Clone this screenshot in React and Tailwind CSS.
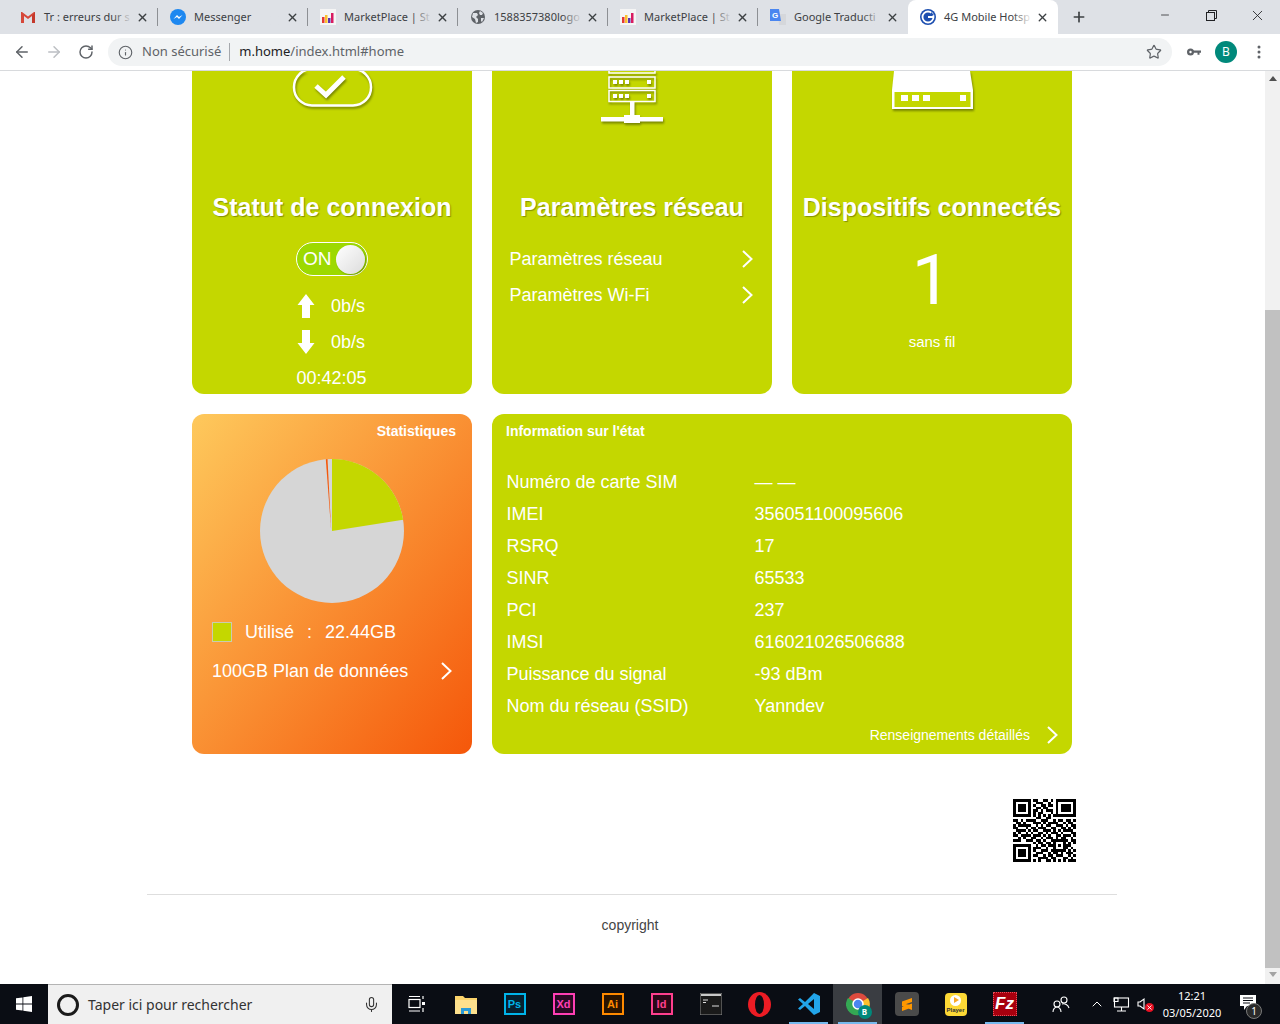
import { X, Plus, ArrowLeft, ArrowRight, RotateCw, Info, Star, Minus, ChevronUp, Mic } from 'lucide-react';

const sans = 'font-["Liberation_Sans",Arial,sans-serif]';
const ui = 'font-["Noto_Sans","Open_Sans",sans-serif]';

const Gmail = () => (
  <svg width="16" height="16" viewBox="0 0 16 16">
    <path d="M1 3v11h3V7l4 3 4-3v7h3V3h-1L8 7.5 2 3z" fill="#d6483a" />
    <path d="M12 7v7h3V3z" fill="#c4392c" />
  </svg>
);
const Messenger = () => (
  <svg width="16" height="16" viewBox="0 0 16 16">
    <circle cx="8" cy="8" r="8" fill="#1e88f0" />
    <path d="M3.5 10 7 6l2 2 3.5-2-3.500 4-2-2z" fill="#fff" />
  </svg>
);
const Market = () => (
  <svg width="16" height="16" viewBox="0 0 16 16">
    <rect width="16" height="16" fill="#f5f5f5" />
    <rect x="2" y="8" width="2.500" height="6" fill="#e53935" />
    <rect x="5" y="6" width="2.500" height="8" fill="#fbc02d" />
    <rect x="8" y="9" width="2.500" height="5" fill="#5e35b1" />
    <rect x="11" y="4" width="2.500" height="10" fill="#d81b60" />
  </svg>
);
const Globe = () => (
  <svg width="16" height="16" viewBox="0 0 16 16">
    <circle cx="8" cy="8" r="7" fill="#5f6368" />
    <path d="M3 4h4l1 2-2 2 2 2v3l-2 1-1-4-3-2zM10 2l3 2-1 2h-2l-1-2zM11 9h3l-2 4-1-1z" fill="#dee1e6" />
  </svg>
);
const Translate = () => (
  <svg width="16" height="16" viewBox="0 0 16 16">
    <path d="M8 5h8v11H9z" fill="#d5d7db" />
    <path d="M0 0h9l2 12H0z" fill="#4a86f0" />
    <text x="2" y="9" fontSize="8" fontWeight="700" fill="#fff" fontFamily="Liberation Sans">G</text>
  </svg>
);
const HotspotIcon = () => (
  <svg width="16" height="16" viewBox="0 0 16 16">
    <circle cx="8" cy="8" r="8" fill="#1d4fb0" />
    <circle cx="8" cy="8" r="5.500" fill="none" stroke="#fff" strokeWidth="1.800" />
    <path d="M8 8h5" stroke="#fff" strokeWidth="2" />
    <path d="M11 3l3 3-3 1z" fill="#1d4fb0" />
  </svg>
);

const tabs = [
  { title: 'Tr : erreurs dur s', icon: <Gmail /> },
  { title: 'Messenger', icon: <Messenger /> },
  { title: 'MarketPlace | St', icon: <Market /> },
  { title: '1588357380logo', icon: <Globe /> },
  { title: 'MarketPlace | St', icon: <Market /> },
  { title: 'Google Traducti', icon: <Translate /> },
  { title: '4G Mobile Hotsp', icon: <HotspotIcon />, active: true },
];

const Tab = ({ tab, last }) => (
  <div
    className={`relative flex h-[34px] w-[150px] items-center pl-3 pr-[9px] ${
      tab.active ? 'rounded-t-lg bg-white' : ''
    }`}
  >
    <span className="shrink-0">{tab.icon}</span>
    <div className="relative ml-2 w-[88px]">
      <span className={`block whitespace-nowrap text-[11px] leading-4 text-[#3c4043] ${ui}`}>{tab.title}</span>
      <span
        className={`absolute inset-y-0 right-0 w-5 bg-gradient-to-r from-transparent ${
          tab.active ? 'to-white' : 'to-[#dee1e6]'
        }`}
      />
    </div>
    <X size={13} strokeWidth={2.500} className="ml-auto text-[#3c4043]" />
    {!last && !tab.active && <span className="absolute right-0 top-2 h-[18px] w-px bg-[#8d9094]" />}
  </div>
);

const TabBar = () => (
  <div className="flex h-[34px] items-end bg-[#dee1e6] pl-2">
    {tabs.map((t, i) => (
      <Tab key={i} tab={t} last={i === 5} />
    ))}
    <div className="ml-[13px] flex h-[34px] items-center">
      <Plus size={16} strokeWidth={2.500} className="text-[#3c4043]" />
    </div>
    <div className="ml-auto flex h-[34px] items-start text-[#202124]">
      <div className="flex h-[30px] w-[46px] items-center justify-center">
        <Minus size={12} strokeWidth={1.500} />
      </div>
      <div className="flex h-[30px] w-[46px] items-center justify-center">
        <svg width="11" height="11" viewBox="0 0 11 11" fill="none" stroke="currentColor">
          <rect x="0.500" y="2.500" width="8" height="8" />
          <path d="M2.500 2.500v-2h8v8h-2" />
        </svg>
      </div>
      <div className="flex h-[30px] w-[46px] items-center justify-center">
        <X size={17} strokeWidth={1.200} />
      </div>
    </div>
  </div>
);

const Toolbar = () => (
  <div className="flex h-[37px] items-center border-b border-[#d8dadd] bg-white">
    <div className="flex w-[108px] items-center pl-[13px] text-[#5f6368]">
      <ArrowLeft size={18} strokeWidth={2} />
      <ArrowRight size={18} strokeWidth={2} className="ml-[14px] text-[#bcbfc3]" />
      <RotateCw size={16} strokeWidth={2.200} className="ml-[15px]" />
    </div>
    <div className="flex h-7 w-[1064px] items-center rounded-full bg-[#f1f3f4] pl-[10px] pr-[10px]">
      <Info size={15} strokeWidth={1.800} className="text-[#5f6368]" />
      <span className={`ml-[9px] text-[13px] text-[#5f6368] ${ui}`}>Non sécurisé</span>
      <span className="mx-2 h-[18px] w-px bg-[#a5a8ac]" />
      <span className={`ml-px text-[13px] text-[#202124] ${ui}`}>
        m.home<span className="text-[#5f6368]">/index.html#home</span>
      </span>
      <Star size={16} strokeWidth={1.800} className="ml-auto text-[#5f6368]" />
    </div>
    <svg width="14" height="8" viewBox="0 0 14 8" className="ml-[15px]">
      <circle cx="3.500" cy="4" r="3.500" fill="#5f6368" />
      <circle cx="3.500" cy="4" r="1.200" fill="#fff" />
      <path d="M6 2.500h8v2.200h-1.500v2h-2v-2H6z" fill="#5f6368" />
    </svg>
    <div className={`ml-[14px] flex h-[22px] w-[22px] items-center justify-center rounded-full bg-[#00897b] text-xs text-white ${ui}`}>
      B
    </div>
    <svg width="4" height="14" viewBox="0 0 4 14" className="ml-[20px] text-[#5f6368]" fill="currentColor">
      <circle cx="2" cy="2" r="1.500" />
      <circle cx="2" cy="7" r="1.500" />
      <circle cx="2" cy="12" r="1.500" />
    </svg>
  </div>
);

// plain chevron, the lucide one is too small next to the reference
const Chevron = ({ className = '' }) => (
  <svg width="11" height="18" viewBox="0 0 11 18" fill="none" stroke="#fff" strokeWidth="2" className={className}>
    <path d="M1 1l8.500 8L1 17" />
  </svg>
);

const Heading = ({ children }) => (
  <h2 className={`whitespace-nowrap text-center text-[25px] font-bold leading-[30px] text-white [text-shadow:1px_1px_1px_rgba(80,90,0,0.55)] ${sans}`}>
    {children}
  </h2>
);

const ConnectionCard = () => (
  <div className={`flex h-[323px] w-[280px] flex-col items-center overflow-hidden rounded-b-xl bg-[#c4d700] text-[18px] text-white ${sans}`}>
    <svg width="82" height="40" viewBox="291 71 82 40" className="drop-shadow-[1px_2px_1px_rgba(70,80,0,0.6)]">
      <rect x="294" y="69" width="77" height="36.500" rx="18" fill="none" stroke="#fff" strokeWidth="2.500" />
      <path d="M316 86l10 9 18-18" fill="none" stroke="#fff" strokeWidth="5" />
    </svg>
    <div className="mt-[81px]">
      <Heading>Statut de connexion</Heading>
    </div>
    <div className="mt-[20px] flex h-[34px] w-[72px] items-center justify-between rounded-full border border-white bg-[#9dd900] pl-[6px] pr-[2px] text-[19px] font-light">
      <span>ON</span>
      <span className="h-[29px] w-[29px] rounded-full bg-gradient-to-br from-white to-[#dcdcdc] shadow-[1px_1px_2px_rgba(0,0,0,0.3)]" />
    </div>
    <div className="mt-[12px] flex h-[36px] w-[72px] items-center">
      <svg width="18" height="24" viewBox="0 0 18 24" fill="#fff" className="ml-px">
        <path d="M9 0l8.500 11H13v13H5V11H.5z" />
      </svg>
      <span className="ml-[16px]">0b/s</span>
    </div>
    <div className="flex h-[36px] w-[72px] items-center">
      <svg width="18" height="24" viewBox="0 0 18 24" fill="#fff" className="ml-px">
        <path d="M9 24L.5 13H5V0h8v13h4.500z" />
      </svg>
      <span className="ml-[16px]">0b/s</span>
    </div>
    <div className="-ml-px mt-[7px] leading-[22px]">00:42:05</div>
  </div>
);

const NetworkCard = () => (
  <div className={`flex h-[323px] w-[280px] flex-col overflow-hidden rounded-b-xl bg-[#c4d700] text-[18px] text-white ${sans}`}>
    <svg width="64" height="54" viewBox="600 71 64 54" className="ml-[108px] drop-shadow-[1px_2px_1px_rgba(70,80,0,0.6)]" fill="none" stroke="#fff">
      <rect x="609" y="65" width="46" height="8" strokeWidth="1.500" />
      <rect x="609" y="77" width="46" height="11" strokeWidth="1.500" />
      <rect x="609" y="90.500" width="46" height="11" strokeWidth="1.500" />
      <g fill="#fff" stroke="none">
        <rect x="613" y="80" width="4" height="4" />
        <rect x="619" y="80" width="4" height="4" />
        <rect x="625" y="80" width="4" height="4" />
        <rect x="647" y="80" width="4" height="4" />
        <rect x="613" y="94" width="4" height="4" />
        <rect x="619" y="94" width="4" height="4" />
        <rect x="625" y="94" width="4" height="4" />
        <rect x="647" y="94" width="4" height="4" />
        <rect x="630" y="102" width="4.500" height="14" />
        <rect x="601" y="117" width="62" height="4.500" />
        <rect x="624" y="115" width="16" height="8" />
      </g>
    </svg>
    <div className="mt-[67px]">
      <Heading>Paramètres réseau</Heading>
    </div>
    <div className="mt-[19px] flex flex-col pl-[17.500px] pr-[19px]">
      {['Paramètres réseau', 'Paramètres Wi-Fi'].map((label) => (
        <div key={label} className="flex h-[36px] items-center justify-between">
          <span>{label}</span>
          <Chevron />
        </div>
      ))}
    </div>
  </div>
);

const DevicesCard = () => (
  <div className={`flex h-[323px] w-[280px] flex-col items-center overflow-hidden rounded-b-xl bg-[#c4d700] text-white ${sans}`}>
    <svg width="84" height="40" viewBox="890 71 84 40" className="drop-shadow-[1px_2px_1px_rgba(70,80,0,0.6)]">
      <path d="M894 71h76l3 19v19h-81V90z" fill="#fff" />
      <rect x="894.500" y="92" width="76" height="15" fill="#c4d700" />
      <g fill="#fff">
        <rect x="901" y="95" width="7" height="6" />
        <rect x="912" y="95" width="7" height="6" />
        <rect x="923" y="95" width="7" height="6" />
        <rect x="960" y="95" width="6" height="6" />
      </g>
    </svg>
    <div className="mt-[81px]">
      <Heading>Dispositifs connectés</Heading>
    </div>
    <div className={`-ml-px mt-[22px] font-["Roboto",sans-serif] text-[70px] leading-[72px]`}>1</div>
    <div className="mt-[16px] text-[15px] leading-5">sans fil</div>
  </div>
);

const pieSlice = 'M332 531.500L332 459.500A72 72 0 0 1 403.100 520.200Z';

const StatsCard = () => (
  <div className={`flex h-[340px] w-[280px] flex-col rounded-xl bg-[linear-gradient(to_bottom_right,#fec95c,#f5570a)] text-[18px] text-white ${sans}`}>
    <div className="pr-4 pt-[9px] text-right text-sm font-bold leading-4">Statistiques</div>
    <svg width="144" height="144" viewBox="260 459.500 144 144" className="ml-[68px] mt-[20px]">
      <circle cx="332" cy="531.500" r="72" fill="#d6d6d6" />
      <path d={pieSlice} fill="#c4d700" />
      <path d="M331.200 531.500L325.800 459.800 327.500 459.600Z" fill="#f5570a" />
    </svg>
    <div className="ml-5 mt-[19px] flex h-5 items-center">
      <span className="h-5 w-5 border border-[#c9ccb0] bg-[#c4d700]" />
      <span className="ml-[13px]">Utilisé</span>
      <span className="ml-[13px]">:</span>
      <span className="ml-[13px]">22.44GB</span>
    </div>
    <div className="ml-5 mr-5 mt-[17px] flex h-6 items-center justify-between">
      <span>100GB Plan de données</span>
      <Chevron />
    </div>
  </div>
);

const infoRows = [
  ['Numéro de carte SIM', '— —'],
  ['IMEI', '356051100095606'],
  ['RSRQ', '17'],
  ['SINR', '65533'],
  ['PCI', '237'],
  ['IMSI', '616021026506688'],
  ['Puissance du signal', '-93 dBm'],
  ['Nom du réseau (SSID)', 'Yanndev'],
];

const InfoCard = () => (
  <div className={`flex h-[340px] w-[580px] flex-col rounded-xl bg-[#c4d700] text-[18px] text-white ${sans}`}>
    <div className="pl-[14px] pt-[9px] text-sm font-bold leading-4">Information sur l'état</div>
    <div className="mt-[27px] flex flex-col pl-[14.500px]">
      {infoRows.map(([label, value]) => (
        <div key={label} className="flex h-8 items-center">
          <span className="w-[248px]">{label}</span>
          <span>{value}</span>
        </div>
      ))}
    </div>
    <div className="mt-[1px] flex h-6 items-center justify-end pr-[14px] text-sm">
      <span>Renseignements détaillés</span>
      <Chevron className="ml-[17px]" />
    </div>
  </div>
);

const qr = [
  '1111111011001101011111111',
  '1000001001110010010000001',
  '1011101010011011010111101',
  '1011101001101100010111101',
  '1011101011010111010111101',
  '1000001010110001010000001',
  '1111111010101010111111111',
  '0000000001100110000000000',
  '1101011110011100101101101',
  '0110100011101011110010110',
  '1011111001010110011101011',
  '1100010110111001100110101',
  '0111101011001110101011110',
  '1010010100110101110100011',
  '1101111011101010011011101',
  '0010100110010111010110010',
  '1110011101101001111111011',
  '0000000010110110100010101',
  '1111111001011011101011100',
  '1000001011100100100011010',
  '1011101010011101111110101',
  '1011101001110010110101110',
  '1011101011001011011100101',
  '1000001000111101100011010',
  '1111111010100110101010111',
];

const QrCode = () => (
  <svg width="63" height="63" viewBox="0 0 25 25" shapeRendering="crispEdges">
    {qr.flatMap((row, y) =>
      [...row].map((c, x) => (c === '1' ? <rect key={`${x}-${y}`} x={x} y={y} width="1" height="1" fill="#000" /> : null))
    )}
  </svg>
);

const Page = () => (
  <div className="flex min-w-0 flex-1 flex-col bg-white">
    <div className="ml-[192px] flex gap-5">
      <ConnectionCard />
      <NetworkCard />
      <DevicesCard />
    </div>
    <div className="ml-[192px] mt-5 flex gap-5">
      <StatsCard />
      <InfoCard />
    </div>
    <div className="ml-[1013px] mt-[45px]">
      <QrCode />
    </div>
    <div className="ml-[147px] mt-[32px] w-[970px] border-t border-[#dedede] pt-[17px] text-center">
      <span className={`-ml-1 text-sm leading-5 text-[#444] ${sans}`}>copyright</span>
    </div>
  </div>
);

const Scrollbar = () => (
  <div className="flex w-[15px] flex-col items-center bg-[#f1f1f1]">
    <div className="mt-[5px] h-0 w-0 border-x-[4px] border-b-[5px] border-x-transparent border-b-[#505050]" />
    <div className="mt-[229px] h-[658px] w-[15px] bg-[#c1c1c1]" />
    <div className="mt-[4px] h-0 w-0 border-x-[4px] border-t-[5px] border-x-transparent border-t-[#a3a3a3]" />
  </div>
);

const AppTile = ({ label, color, bg }) => (
  <div
    className={`flex h-[22px] w-[22px] items-center justify-center border-2 text-[11px] font-bold ${sans}`}
    style={{ borderColor: color, color, backgroundColor: bg }}
  >
    {label}
  </div>
);

const taskIcons = [
  {
    el: (
      <svg width="18" height="18" viewBox="0 0 18 18" fill="none" stroke="#fff" strokeWidth="1.200">
        <rect x="1" y="4.500" width="11" height="8" />
        <path d="M1 1.500h11M1 16h11M15 1v3M15 13v4" />
        <rect x="14" y="7" width="3" height="3" fill="#fff" stroke="none" />
      </svg>
    ),
  },
  {
    el: (
      <svg width="22" height="20" viewBox="0 0 22 20">
        <path d="M0 2h8l2 2h12v16H0z" fill="#fbd36b" />
        <path d="M0 6h22v14H0z" fill="#fde08d" />
        <path d="M6 14h10v6h-3v-3H9v3H6z" fill="#2a9bd8" />
      </svg>
    ),
  },
  { el: <AppTile label="Ps" color="#00b4ea" bg="#06202f" /> },
  { el: <AppTile label="Xd" color="#ff3fb4" bg="#2a0a24" /> },
  { el: <AppTile label="Ai" color="#ff8a00" bg="#2a1400" /> },
  { el: <AppTile label="Id" color="#ff3f8e" bg="#2a0818" /> },
  {
    el: (
      <svg width="22" height="22" viewBox="0 0 22 22">
        <rect width="22" height="22" fill="#1a1a1a" stroke="#8a8a8a" strokeWidth="1" />
        <rect x="1" y="1" width="20" height="2" fill="#c9c9c9" />
        <path d="M3 7h5M3 9.500h3M12 13h7" stroke="#ddd" strokeWidth="1" />
      </svg>
    ),
  },
  {
    el: (
      <svg width="23" height="25" viewBox="0 0 23 25">
        <ellipse cx="11.500" cy="12.500" rx="11.500" ry="12.500" fill="#ec1c24" />
        <ellipse cx="11.500" cy="12.500" rx="4.500" ry="9.500" fill="#0a0d14" />
      </svg>
    ),
  },
  {
    el: (
      <svg width="24" height="24" viewBox="0 0 24 24">
        <path d="M17 1l6 3v16l-6 3-9-9-5 4-2-1.500L6 12 1 7.500 3 6l5 4z" fill="#22a5ea" />
        <path d="M17 7l-6 5 6 5z" fill="#0a0d14" />
      </svg>
    ),
    bar: true,
  },
  {
    el: (
      <div className="relative ml-[2px] h-[24px] w-[26px]">
        <svg width="24" height="24" viewBox="0 0 24 24">
          <circle cx="12" cy="12" r="11" fill="#dd4b3e" />
          <path d="M12 12L22 6a11 11 0 0 1-9 17z" fill="#fbc02d" />
          <path d="M12 12l1 11A11 11 0 0 1 2 6z" fill="#34a853" />
          <circle cx="12" cy="12" r="5" fill="#4a86f0" stroke="#fff" strokeWidth="1.500" />
        </svg>
        <span className={`absolute -bottom-[3px] right-0 flex h-[14px] w-[14px] items-center justify-center rounded-full bg-[#00897b] text-[8px] font-bold text-white ${ui}`}>
          B
        </span>
      </div>
    ),
    bar: true,
    hi: true,
  },
  {
    el: (
      <div className="flex h-[24px] w-[24px] items-center justify-center rounded-sm bg-[#4a4a4a]">
        <svg width="24" height="24" viewBox="0 0 24 24" fill="#ff9800">
          <path d="M7 9.500L17 6v4L7 13.500zM7 10.500l10 3.500v4L7 14zM7 15l10-3.500v4L7 19z" />
        </svg>
      </div>
    ),
  },
  {
    el: (
      <div className="flex h-[23px] w-[22px] flex-col items-center rounded-sm bg-[#fdd835]">
        <span className="mt-[2px] flex h-[11px] w-[11px] items-center justify-center rounded-full bg-white">
          <span className="ml-px h-0 w-0 border-y-[3px] border-l-[5px] border-y-transparent border-l-[#f9a825]" />
        </span>
        <span className={`mt-px text-[6px] font-bold leading-[7px] text-[#333] ${sans}`}>Player</span>
      </div>
    ),
  },
  {
    el: (
      <div className={`flex h-[24px] w-[24px] items-center justify-center border border-dotted border-[#e8505b] bg-[#a8000e] text-[17px] font-bold italic text-white ${sans}`}>
        Fz
      </div>
    ),
    bar: true,
  },
];

const Taskbar = () => (
  <div className="flex h-10 items-stretch bg-[#0a0d14] text-white">
    <div className="flex w-12 items-center justify-center">
      <svg width="16" height="16" viewBox="0 0 16 16" fill="#fff">
        <path d="M0 2.300l6.500-.9v6.200H0zM7.300 1.300L16 0v7.600H7.300zM0 8.400h6.500v6.200L0 13.700zM7.300 8.400H16V16l-8.700-1.300z" />
      </svg>
    </div>
    <div className="flex w-[344px] items-center border-t border-[#b4b4b4] bg-[#f0f0f0] pl-[9px] pr-3">
      <span className="h-[22px] w-[22px] rounded-full border-[3px] border-[#1a1a1a]" />
      <span className={`ml-[9px] text-sm text-[#333] ${ui}`}>Taper ici pour rechercher</span>
      <Mic size={17} strokeWidth={1.500} className="ml-auto text-[#333]" />
    </div>
    {taskIcons.map((t, i) => (
      <div
        key={i}
        className={`relative flex w-[49px] items-center justify-center ${t.hi ? 'bg-[#3a3d42]' : ''}`}
      >
        {t.el}
        {t.bar && <span className="absolute inset-x-[5px] bottom-0 h-[2px] bg-[#76b9ed]" />}
      </div>
    ))}
    <div className="flex w-[56px] items-center justify-center pl-[8px]">
      <svg width="18" height="18" viewBox="0 0 18 18" fill="none" stroke="#fff" strokeWidth="1.100">
        <circle cx="5" cy="9" r="3" />
        <circle cx="12" cy="5" r="3" />
        <path d="M1 17c0-3 2-5 4-5s4 2 4 5M10 9c3-1 6 1 7 4" />
      </svg>
    </div>
    <div className="ml-[4px] flex w-[16px] items-center justify-center">
      <ChevronUp size={18} strokeWidth={1.500} />
    </div>
    <div className="ml-[8px] flex w-[17px] items-center justify-center">
      <svg width="17" height="15" viewBox="0 0 17 15" fill="none" stroke="#fff" strokeWidth="1.100">
        <rect x="1.500" y="1" width="14" height="9" />
        <path d="M8.500 10v4M4 14h9M1 1h4v3.500H1z" />
      </svg>
    </div>
    <div className="relative ml-[7px] flex w-[18px] items-center justify-start">
      <svg width="8" height="14" viewBox="0 0 8 14" fill="none" stroke="#fff" strokeWidth="1.100">
        <path d="M1 5h2l4-3v10L3 9H1z" />
      </svg>
      <span className="absolute bottom-[12px] left-[8px] flex h-[9px] w-[9px] items-center justify-center rounded-full bg-[#e81123]">
        <X size={7} strokeWidth={3} />
      </span>
    </div>
    <div className={`-ml-px flex w-[76px] flex-col items-center justify-center text-[11px] leading-[17px] ${ui}`}>
      <span>12:21</span>
      <span>03/05/2020</span>
    </div>
    <div className="relative flex flex-1 items-center justify-center pb-[3px] pr-[14px]">
      <svg width="16" height="15" viewBox="0 0 16 15" fill="#fff">
        <path d="M0 0h16v11H7l-3 4v-4H0z" />
        <path d="M3 3h10M3 5.500h10M3 8h7" stroke="#0a0d14" strokeWidth="1" />
      </svg>
      <span className={`absolute bottom-[5px] right-[18px] flex h-[16px] w-[16px] items-center justify-center rounded-full border border-[#7a7a7a] bg-[#2a2a2a] text-[10px] ${ui}`}>
        1
      </span>
    </div>
  </div>
);

export default function App() {
  return (
    <div className="flex h-screen w-full flex-col overflow-hidden bg-white">
      <TabBar />
      <Toolbar />
      <div className="flex min-h-0 flex-1 overflow-hidden">
        <Page />
        <Scrollbar />
      </div>
      <Taskbar />
    </div>
  );
}
